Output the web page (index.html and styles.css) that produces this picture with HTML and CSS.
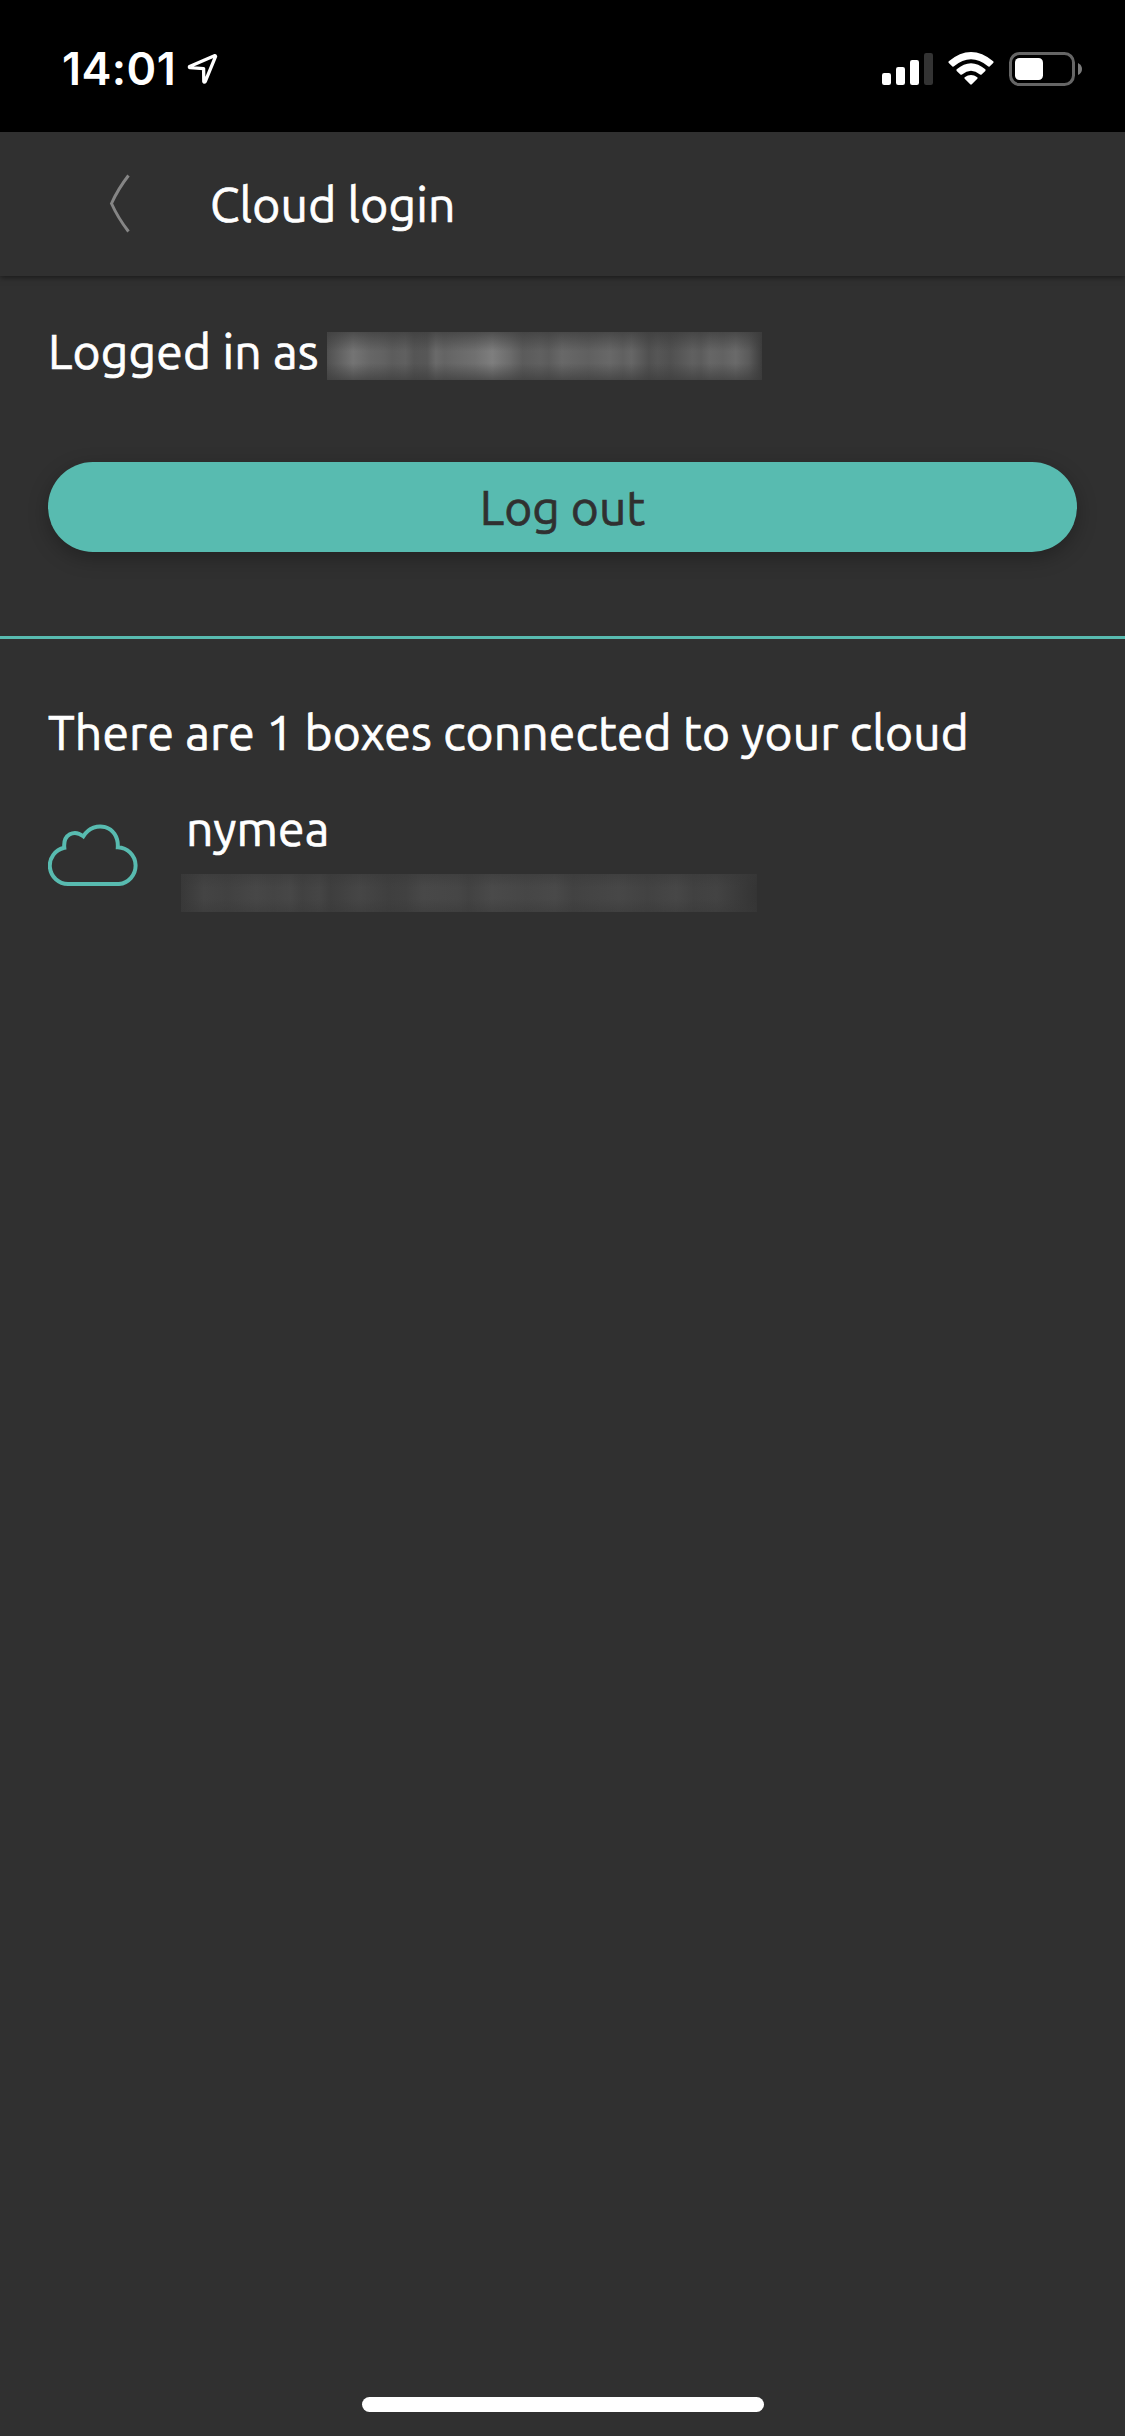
FILE: index.html
```html
<!DOCTYPE html>
<html lang="en">
<head>
<meta charset="utf-8">
<title>Cloud login</title>
<link rel="stylesheet" href="styles.css">
</head>
<body>
<div class="status-bar">
  <div class="clock">
    <span class="time">14:01</span>
    <svg class="location" width="32" height="34" viewBox="0 0 32 34"><path d="M29 3.6 L3.600 14.400 Q3 15.400 4 15.700 L17.600 16.600 L17.800 29.600 Q18.300 30.800 19.200 29.600 L29.600 4.400 Z" fill="none" stroke="#fff" stroke-width="3.3" stroke-linejoin="round"/></svg>
  </div>
  <div class="indicators">
    <svg width="51" height="34" viewBox="0 0 51 34" fill="#fff"><rect y="21" width="9" height="12" rx="2.2"/><rect x="14" y="15" width="9" height="18" rx="2.2"/><rect x="28" y="8" width="9" height="25" rx="2.2"/><rect x="42" y="1" width="9" height="32" rx="2.2" fill="#333"/></svg>
    <svg width="46" height="34" viewBox="0 0 46 34" fill="#fff"><path d="M.8 9.2 Q23 -9.2 45.2 9.2 Q46 10 45.2 11 L41.6 14.4 Q40.8 15 40 14.3 Q23 .4 6 14.3 Q5.200 15 4.400 14.400 L.8 11 Q0 10 .8 9.200Z"/><path d="M8.700 17.200 Q23 5.200 37.300 17.200 Q38 18 37.300 19 L33.600 22.500 Q32.800 23.100 32 22.400 Q23 15.200 14 22.400 Q13.200 23.100 12.400 22.500 L8.700 19 Q8 18 8.700 17.200Z"/><path d="M16.700 25.200 Q23 20.800 29.300 25.200 Q30 26 29.300 26.800 L23.800 32.300 Q23 33 22.200 32.300 L16.700 26.800 Q16 26 16.700 25.200Z"/></svg>
    <svg width="74" height="34" viewBox="0 0 74 34"><rect x="1.500" y="1.500" width="63" height="31" rx="9" fill="none" stroke="#666" stroke-width="3"/><rect x="6" y="6" width="28" height="22" rx="4.500" fill="#fff"/><path d="M69 11 Q73 13 73 17 T69 23Z" fill="#7b7b7b"/></svg>
  </div>
</div>
<header class="app-header">
  <svg class="back" width="22" height="60" viewBox="0 0 22 60"><path d="M19.500 1.500 Q9 15 2.500 29.500 Q9 44 19.500 57.500" fill="none" stroke="#858585" stroke-width="3"/></svg>
  <h1 class="title">Cloud login</h1>
</header>
<main>
  <section class="account">
    <p class="login"><span class="login-label">Logged in as</span><span class="hidden-email"></span></p>
    <button class="logout"><span>Log out</span></button>
  </section>
  <section class="boxes">
    <p class="summary">There are 1 boxes connected to your cloud</p>
    <div class="box-row">
      <svg class="cloud" width="90" height="62" viewBox="0 0 90 62"><path d="M20 60 A18.300 18.300 0 0 1 16.300 23.800 C15 10.500 26 5 35.300 12.300 C46.500 -5 71 1.500 69.800 23.300 A18.400 18.400 0 0 1 71 60 Z" fill="none" stroke="#58bbb0" stroke-width="4"/></svg>
      <div class="box-text">
        <span class="box-name">nymea</span>
        <span class="hidden-id"></span>
      </div>
    </div>
  </section>
</main>
<footer class="home"><div class="home-indicator"></div></footer>
</body>
</html>
```
FILE: styles.css
```css
* { box-sizing: border-box; }
body {
  margin: 0;
  width: 1125px;
  height: 2436px;
  display: flex;
  flex-direction: column;
  background: #303030;
  color: #fff;
  font: 400 48px/64px Ubuntu, "Noto Sans", sans-serif;
  letter-spacing: 0.16px;
  -webkit-text-stroke: 0.7px currentColor;
  overflow: hidden;
}
p, h1 { margin: 0; font-weight: inherit; font-size: inherit; white-space: nowrap; }
svg { display: block; flex: none; }
.status-bar {
  height: 132px;
  flex: none;
  display: flex;
  justify-content: space-between;
  padding: 52px 42px 0 62px;
  background: #000;
}
.clock { display: flex; height: 34px; }
.time {
  width: 124px;
  font: 600 45px/34px Inter, sans-serif;
  letter-spacing: 0.4px;
  -webkit-text-stroke: 0;
}
.indicators { display: flex; gap: 15px; }
.app-header {
  height: 144px;
  flex: none;
  display: flex;
  align-items: center;
  padding-left: 109px;
  box-shadow: 0 1px 6px rgba(0, 0, 0, 0.55);
}
.title { margin-left: 79px; }
.account {
  height: 363px;
  padding: 43px 48px 0;
  border-bottom: 3px solid #58bbb0;
}
.login { display: flex; height: 64px; }
.login-label { width: 279px; }
.hidden-email {
  width: 435px;
  height: 48px;
  margin-top: 13px;
  background:
    linear-gradient(#3b3b3bb0, #3b3b3b00 40%, #3b3b3b00 65%, #3b3b3bb0),
    linear-gradient(90deg, #505050, #747474 6%, #666 10%, #626262 13%, #5c5c5c 15%, #606060 18%, #555 20%, #575757 23%, #6a6a6a 25%, #646464 27%, #6b6b6b 31%, #707070 34%, #7e7e7e 38%, #6c6c6c 42%, #5b5b5b 45%, #606060 49%, #5c5c5c 51%, #686868 54%, #606060 60%, #686868 65%, #606060 68%, #666 70%, #505050 74%, #565656 76%, #505050 79%, #606060 84%, #5c5c5c 86%, #666 88%, #626262 91%, #6a6a6a 94%, #5a5a5a 97%, #3c3c3c);
}
.logout {
  display: flex;
  align-items: center;
  justify-content: center;
  width: 1029px;
  height: 90px;
  margin-top: 79px;
  padding: 0;
  border: 0;
  border-radius: 45px;
  background: #58bbb0;
  color: #303030;
  font: inherit;
  box-shadow: 0 6px 20px rgba(0, 0, 0, 0.28);
}
.boxes { padding: 61px 48px 0; }
.box-row { display: flex; margin-top: 32px; }
.cloud { margin-top: 28px; }
.box-text { display: flex; flex-direction: column; margin-left: 43px; }
.box-name { margin-left: 5px; }
.hidden-id {
  width: 576px;
  height: 38px;
  margin-top: 14px;
  background:
    linear-gradient(#38383880, #38383800 35%, #38383800 65%, #38383880),
    linear-gradient(90deg, #383838, #444 4%, #414141 8%, #474747 13%, #444 16%, #474747 19%, #414141 21%, #454545 24%, #3e3e3e 26%, #464646 31%, #3f3f3f 36%, #414141 39%, #484848 42%, #464646 48%, #424242 50%, #4a4a4a 54%, #464646 60%, #494949 65%, #424242 68%, #474747 76%, #424242 81%, #474747 86%, #414141 89%, #434343 93%, #343434);
}
.home {
  display: flex;
  justify-content: center;
  margin-top: auto;
  padding: 0 0 24px 1px;
}
.home-indicator { width: 402px; height: 15px; border-radius: 8px; background: #fff; }
```
